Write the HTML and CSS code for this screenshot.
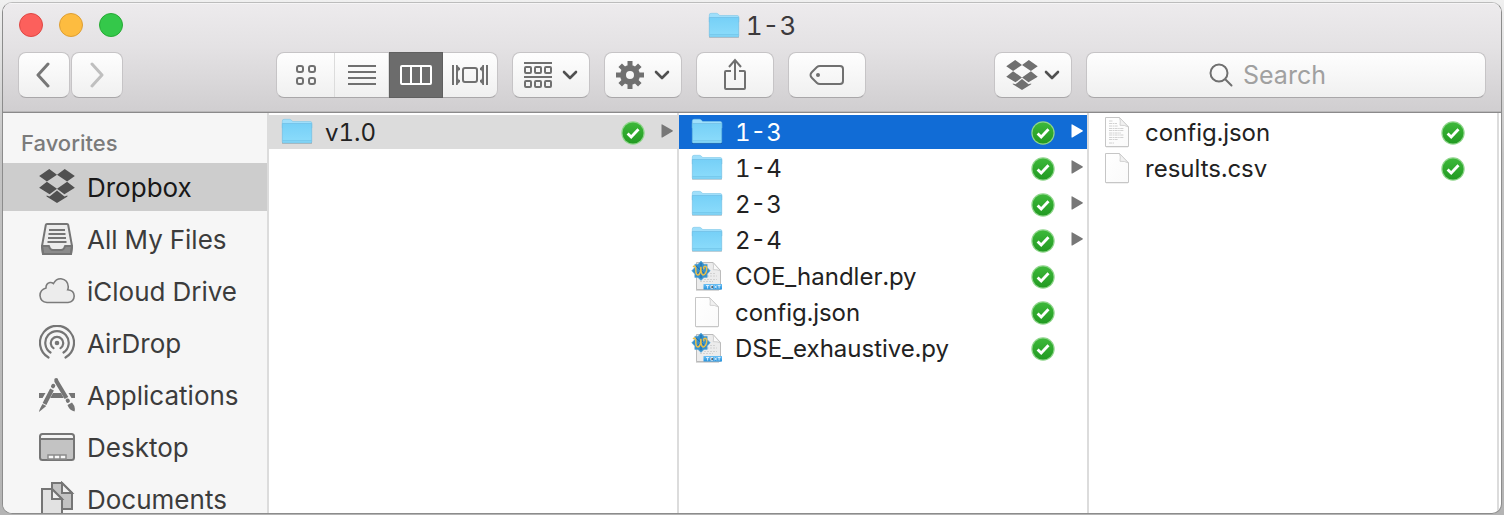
FILE: index.html
```html
<!DOCTYPE html>
<html lang="en">
<head>
<meta charset="utf-8">
<meta name="viewport" content="width=device-width, initial-scale=1">
<title>1-3</title>
<link rel="stylesheet" href="styles.css">
</head>
<body>
<svg class="defs" aria-hidden="true">
  <defs>
    <linearGradient id="folder-fill" x1="0" y1="0" x2="0" y2="1"><stop offset="0" stop-color="#76d0f7"/><stop offset="1" stop-color="#8cdcfb"/></linearGradient>
    <linearGradient id="check-fill" x1="0" y1="0" x2="0" y2="1"><stop offset="0" stop-color="#3db83a"/><stop offset="1" stop-color="#229a22"/></linearGradient>
    <linearGradient id="page-fill" x1="0" y1="0" x2="1" y2="1"><stop offset="0" stop-color="#fff"/><stop offset="1" stop-color="#fafafa"/></linearGradient>
    <linearGradient id="text-fill" x1="0" y1="0" x2="0" y2="1"><stop offset="0" stop-color="#6cc0f4"/><stop offset="1" stop-color="#2492de"/></linearGradient>
  </defs>
  <symbol id="dropbox" viewBox="0 0 106 101">
    <path fill="currentColor" d="M0 21 30 0 53 17 23 37ZM53 17 76 0 106 21 83 37ZM0 56 23 38 53 59 31 75ZM106 56 83 38 53 59 75 75ZM22 79 31 82 53 64 75 82 84 79V82L53 101 22 82Z"/>
  </symbol>
  <symbol id="folder" viewBox="0 0 32 28">
    <path fill="#000" opacity=".16" d="M1 24h30v2H1z"/>
    <path fill="#9fdffb" stroke="#7cc6e8" stroke-width=".6" d="M1.3 3q0-1.7 1.7-1.7h5.500q1 0 1.700.8l1.600 1.400h17.500q1.500 0 1.500 1.500V10h-29.500z"/>
    <path fill="url(#folder-fill)" stroke="#68b9e0" stroke-width=".6" d="M1.300 5.500h29.400V24q0 .9-.9.900H2.200q-.9 0-.9-.9z"/>
    <path stroke="#68bce2" stroke-width=".8" d="M1.500 22.800h29"/>
  </symbol>
  <symbol id="check" viewBox="0 0 24 24">
    <circle cx="12" cy="12" r="11.700" fill="#8ed58a"/>
    <circle cx="12" cy="12" r="10.500" fill="url(#check-fill)"/>
    <path fill="none" stroke="#fff" stroke-width="2.800" d="m6.600 12.400 3.600 3.600 7.300-7.800"/>
  </symbol>
  <symbol id="arrow" viewBox="0 0 12 18"><path fill="currentColor" d="M.5.900Q.5 0 1.400.5l10 5.700q.9.600 0 1.200l-10 6Q.5 13.900.5 13z"/></symbol>
  <symbol id="page" viewBox="0 0 32 32">
    <path fill="none" stroke="#000" stroke-opacity=".12" stroke-width="2" d="M5 30.500h22"/>
    <path fill="url(#page-fill)" stroke="#c6c6c6" d="M4.500 1.500h14L27.500 11v19.500h-23z"/>
    <path fill="#f1f1f1" stroke="#c9c9c9" stroke-width=".8" d="M18.500 1.500q1.300 3 .5 7.800 4.500-.5 8.500 1.700z"/>
  </symbol>
  <symbol id="page-text" viewBox="0 0 32 32">
    <use href="#page"/>
    <path stroke="#c6c6c6" stroke-width=".8" stroke-dasharray="3 .6 1.500 .5" d="M8 5h4M8 7.500h8M8 10h9M8 12.500h15M8 14.500h15M8 17h12M8 19h15M8 21.500h15M8 23.500h9M8 27h5"/>
  </symbol>
  <symbol id="python" viewBox="0 0 32 32">
    <path fill="none" stroke="#000" stroke-opacity=".2" stroke-width="1.500" d="M5 30h23"/>
    <path fill="#ececec" stroke="#b5b5b5" stroke-width=".9" d="M5.500 2.500h16.500l7.500 8v19h-24z"/>
    <path fill="#fafafa" stroke="#c0c0c0" stroke-width=".7" d="M22 2.500q1 3.500.2 7.200 4-.4 7.300 1.300z"/>
    <path stroke="#cfcfcf" stroke-width=".9" stroke-dasharray="2 1" d="M19 13.500h6M16 16h10M13 19.500h13M9 21.500h13"/>
    <path fill="#3590cd" stroke="#5ca9d9" stroke-width=".6" d="m10 1 3 3.300h3.200v3.300l3 3.200-3 3.300v3.300h-3.200l-3 3-3-3H3.800v-3.300l-3-3.300 3-3.200V4.300H7z"/>
    <path stroke="#1e6ca8" stroke-width="1" d="M10 3v15M5 15l10-9M5 6l10 9"/>
    <path fill="none" stroke="#e9c04c" stroke-width="1.500" stroke-linecap="round" d="M2.500 6.500q2.500-1.500 2.300 2.600-.2 6.200 2.300 5.800 2.600-.5 2.800-8.200-.1 7.500 1.900 8.200 2.500.4 3.700-4 .8-4.300-1.300-4.700-1.900.2-1.300 2.600"/>
    <path fill="url(#text-fill)" d="M12.500 24h18.500v5.500H12.500z"/>
    <path stroke="#e3f3ff" stroke-width=".9" d="M15 25.500h3.200m-1.600 0v3m5.400-3h-2.200v2.800h2.200m-2.200-1.400h2m1.500-1.400 2.500 2.900m0-2.900-2.500 2.900m3.500-2.900h2.700m-1.400 0v3"/>
  </symbol>
  <symbol id="chevron" viewBox="0 0 16 10"><path fill="none" stroke="#505050" stroke-width="2.600" stroke-linecap="round" stroke-linejoin="round" d="m2 2 6 6 6-6"/></symbol>
</svg>

<main class="window">
  <header class="header">
    <div class="titlebar">
      <div class="lights">
        <button class="light light-close" aria-label="Close"></button>
        <button class="light light-min" aria-label="Minimize"></button>
        <button class="light light-zoom" aria-label="Zoom"></button>
      </div>
      <h1 class="title"><svg class="folder-icon"><use href="#folder"/></svg>1-3</h1>
    </div>
    <div class="toolbar">
      <div class="nav">
        <button class="tool nav-button" aria-label="Back"><svg width="16" height="26" viewBox="0 0 16 26"><path class="line-thick" stroke="#777" d="M12 2 2 13l10 11"/></svg></button>
        <button class="tool nav-button" aria-label="Forward" disabled><svg width="16" height="26" viewBox="0 0 16 26"><path class="line-thick" stroke="#bfbfbf" d="m3 2 10 11L3 24"/></svg></button>
      </div>
      <div class="views">
        <button class="view view-first" aria-label="Icon view"><svg width="22" height="22" viewBox="0 0 22 22"><path class="line" d="M3 2h3q2 0 2 2v2q0 2-2 2H4Q2 8 2 6V4q0-2 2-2ZM16 2h2q2 0 2 2v2q0 2-2 2h-2q-2 0-2-2V4q0-2 2-2ZM4 14h2q2 0 2 2v2q0 2-2 2H4q-2 0-2-2v-2q0-2 2-2ZM16 14h2q2 0 2 2v2q0 2-2 2h-2q-2 0-2-2v-2q0-2 2-2Z"/></svg></button>
        <button class="view" aria-label="List view"><svg width="28" height="22" viewBox="0 0 28 22"><path class="line" d="M0 2h28M0 8h28M0 14h28M0 20h28"/></svg></button>
        <button class="view view-on" aria-label="Column view" aria-pressed="true"><svg width="32" height="22" viewBox="0 0 32 22"><path fill="none" stroke="#fff" stroke-width="2" d="M2 2h28q1 0 1 1v16q0 1-1 1H2q-1 0-1-1V3q0-1 1-1ZM11 2v18M21 2v18"/></svg></button>
        <button class="view" aria-label="Cover Flow view"><svg width="36" height="22" viewBox="0 0 36 22"><path class="line" d="M1 1v20M35 1v20M13 4h10q2 0 2 2v10q0 2-2 2H13q-2 0-2-2V6q0-2 2-2Z"/><path fill="#707070" d="M4 1h1.500Q6 3 8 4v2q-2 0-2 2v6q0 2 2 2v2q-2 1-2.500 3H4zM32 1h-1.500Q30 3 28 4v2q2 0 2 2v6q0 2-2 2v2q2 1 2.500 3H32z"/></svg></button>
      </div>
      <button class="tool menu" aria-label="Arrange">
        <svg width="28" height="28" viewBox="0 0 28 28"><path class="line" d="M0 2h28M0 16h28M2 6h4q1 0 1 1v4q0 1-1 1H2q-1 0-1-1V7q0-1 1-1ZM12 6h4q1 0 1 1v4q0 1-1 1h-4q-1 0-1-1V7q0-1 1-1ZM22 6h4q1 0 1 1v4q0 1-1 1h-4q-1 0-1-1V7q0-1 1-1ZM2 20h4q1 0 1 1v4q0 1-1 1H2q-1 0-1-1v-4q0-1 1-1ZM12 20h4q1 0 1 1v4q0 1-1 1h-4q-1 0-1-1v-4q0-1 1-1ZM22 20h4q1 0 1 1v4q0 1-1 1h-4q-1 0-1-1v-4q0-1 1-1Z"/></svg>
        <svg class="chevron"><use href="#chevron"/></svg>
      </button>
      <button class="tool menu" aria-label="Action">
        <svg width="28" height="28" viewBox="-14 -14 28 28"><g fill="none" stroke="#707070"><circle r="7" stroke-width="6"/><path stroke-width="5" d="M0-9v-5M0 9v5M-9 0h-5M9 0h5M-6.500-6.500l-3.300-3.300M6.500 6.500l3.300 3.300M6.500-6.500l3.300-3.300M-6.500 6.500l-3.300 3.300"/></g></svg>
        <svg class="chevron"><use href="#chevron"/></svg>
      </button>
      <button class="tool" aria-label="Share"><svg width="24" height="34" viewBox="0 0 24 34"><path class="line" d="M8 13H3q-1 0-1 1v16q0 1 1 1h18q1 0 1-1V14q0-1-1-1h-5M12 22V3M6 9l6-7 6 7"/></svg></button>
      <button class="tool" aria-label="Edit Tags"><svg width="36" height="22" viewBox="0 0 36 22"><path class="line" d="M11 2h20q3 0 3 3v12q0 3-3 3H11q-2 0-3-1l-5-5q-3-3 0-6l5-5q1-1 3-1Z"/><circle cx="9" cy="11" r="2" fill="#707070"/></svg></button>
      <button class="tool menu menu-dropbox" aria-label="Dropbox"><svg class="dropbox-tool"><use href="#dropbox"/></svg><svg class="chevron"><use href="#chevron"/></svg></button>
      <label class="tool search" for="search">
        <svg width="24" height="24" viewBox="0 0 24 24"><path class="line" stroke-linecap="round" d="M10 1.500a8.500 8.500 0 1 1 0 17 8.500 8.500 0 0 1 0-17ZM16 16l6.500 6.500"/></svg>
        <input class="search-input" id="search" type="text" placeholder="Search" aria-label="Search">
      </label>
    </div>
  </header>

  <div class="body">
    <nav class="sidebar" aria-labelledby="favorites">
      <h2 class="heading" id="favorites">Favorites</h2>
      <a class="place place-on" href="#dropbox-folder"><svg width="36" height="36"><use href="#dropbox" height="34"/></svg>Dropbox</a>
      <a class="place" href="#all"><svg width="36" height="36" viewBox="0 0 36 36"><path fill="#ececec" d="M7 3h22l4 22-3 8H6l-3-8z"/><path fill="#8b8b8b" stroke="#757575" stroke-width="2" stroke-linejoin="round" d="M3 25h7q1 4 4 4h8q3 0 4-4h7l-1 8H4z"/><path fill="none" stroke="#757575" stroke-width="2" stroke-linejoin="round" d="M8 3h20q1 0 1.200 1L33 25v1l-1 7H4l-1-7v-1L6.800 4Q7 3 8 3Z"/><path stroke="#757575" stroke-width="2" d="M10 9h16M9.500 13h17M9 17h18M8.500 21h19"/></svg>All My Files</a>
      <a class="place" href="#icloud"><svg width="36" height="36" viewBox="0 0 36 36"><path fill="#ececec" stroke="#7b7b7b" stroke-width="1.600" d="M8 29.500q-6.500-.5-7-7 .2-6 6-7.500-.2-4.500 4-5.500 1.800-.2 3.500 1Q17 5.500 22 5.700q7 .8 7.300 8.300-.1 1.500-.6 2.700 6.300.5 6.500 6.300-.2 6-6.200 6.500z"/></svg>iCloud Drive</a>
      <a class="place" href="#airdrop"><svg width="36" height="36" viewBox="0 0 36 36"><g fill="none" stroke="#757575" stroke-width="2.200" stroke-linecap="round"><path d="M9.500 32.500a17 17 0 1 1 17 0M11.500 27.500a11.700 11.700 0 1 1 13 0M14.500 23.200a6.200 6.200 0 1 1 7 0"/></g><circle cx="18" cy="18" r="2.300" fill="#757575"/></svg>AirDrop</a>
      <a class="place" href="#applications"><svg width="36" height="36" viewBox="0 0 36 36"><path fill="#757575" d="M0 16h6.500L3.600 21H0zM14 16h8l2.800 5H11.200zM29.500 16H36v5h-3.500z"/><path stroke="#757575" stroke-width="4.200" d="M17 3.500 27.500 21M13 12.500 5.500 27"/><path stroke="#757575" stroke-width="4" stroke-linecap="round" d="M17.200 3v.1M14 9.300l.3-.5M28.700 23.500l.2.300"/><path fill="#757575" d="m3.500 27 3.800 2L0 35q0-2 3.500-8ZM28.500 28l4.500-2.500q4 4.500 2.500 9-5.500-1.500-7-6.500Z"/></svg>Applications</a>
      <a class="place" href="#desktop"><svg width="36" height="36" viewBox="0 0 36 36"><rect x="1" y="5" width="34" height="26" rx="2.500" fill="#c3c3c3"/><path fill="#f3f3f3" d="M2 6h32v4H2z"/><rect x="1" y="5" width="34" height="26" rx="2.500" fill="none" stroke="#757575" stroke-width="2"/><path stroke="#757575" stroke-width="2" d="M1 10h34"/><path fill="#f7f7f7" stroke="#8c8c8c" stroke-width="1.500" d="M9 26h18v4H9zM15 26v4M21 26v4"/></svg>Desktop</a>
      <a class="place" href="#documents"><svg width="36" height="36" viewBox="0 0 36 36"><path fill="#c3c3c3" stroke="#757575" stroke-width="2" d="M13 2h10l10 10v16H13z"/><path fill="#f0f0f0" stroke="#757575" stroke-width="2" d="M23 2v10h10z"/><path fill="#e2e2e2" stroke="#757575" stroke-width="2" d="M3 8h10l10 10v20H3z"/><path fill="#f0f0f0" stroke="#757575" stroke-width="2" d="M13 8v10h10z"/></svg>Documents</a>
    </nav>

    <ul class="column">
      <li><a class="file file-path" href="#v1.0"><svg class="file-icon"><use href="#folder"/></svg><span class="name">v1.0</span><svg class="check"><use href="#check"/></svg><svg class="arrow"><use href="#arrow"/></svg></a></li>
    </ul>
    <ul class="column">
      <li><a class="file file-on" href="#1-3"><svg class="file-icon"><use href="#folder"/></svg><span class="name">1-3</span><svg class="check"><use href="#check"/></svg><svg class="arrow"><use href="#arrow"/></svg></a></li>
      <li><a class="file" href="#1-4"><svg class="file-icon"><use href="#folder"/></svg><span class="name">1-4</span><svg class="check"><use href="#check"/></svg><svg class="arrow"><use href="#arrow"/></svg></a></li>
      <li><a class="file" href="#2-3"><svg class="file-icon"><use href="#folder"/></svg><span class="name">2-3</span><svg class="check"><use href="#check"/></svg><svg class="arrow"><use href="#arrow"/></svg></a></li>
      <li><a class="file" href="#2-4"><svg class="file-icon"><use href="#folder"/></svg><span class="name">2-4</span><svg class="check"><use href="#check"/></svg><svg class="arrow"><use href="#arrow"/></svg></a></li>
      <li><a class="file" href="#coe"><svg class="file-icon"><use href="#python"/></svg><span class="name">COE_handler.py</span><svg class="check"><use href="#check"/></svg><span class="arrow"></span></a></li>
      <li><a class="file" href="#config"><svg class="file-icon"><use href="#page"/></svg><span class="name">config.json</span><svg class="check"><use href="#check"/></svg><span class="arrow"></span></a></li>
      <li><a class="file" href="#dse"><svg class="file-icon"><use href="#python"/></svg><span class="name">DSE_exhaustive.py</span><svg class="check"><use href="#check"/></svg><span class="arrow"></span></a></li>
    </ul>
    <ul class="column">
      <li><a class="file" href="#run-config"><svg class="file-icon"><use href="#page-text"/></svg><span class="name">config.json</span><svg class="check"><use href="#check"/></svg><span class="arrow"></span></a></li>
      <li><a class="file" href="#results"><svg class="file-icon"><use href="#page"/></svg><span class="name">results.csv</span><svg class="check"><use href="#check"/></svg><span class="arrow"></span></a></li>
    </ul>
  </div>
</main>
</body>
</html>
```
FILE: styles.css
```css
* { box-sizing: border-box; }

body {
  margin: 0;
  height: 100vh;
  padding: 2px 2px 1px;
  background: linear-gradient(#f0f0f0, #c4c4c4 30%, #b4b4b4);
  font-family: Inter, "Liberation Sans", sans-serif;
  font-size: 24px;
  font-variant-numeric: tabular-nums;
  color: #222;
}

button, input { font: inherit; margin: 0; padding: 0; border: 0; background: none; }
svg { display: block; flex: none; }
ul { list-style: none; margin: 0; padding: 0; }
a { color: inherit; text-decoration: none; }
.defs { position: absolute; width: 0; height: 0; }

.window {
  display: flex;
  flex-direction: column;
  height: 100%;
  border: 1px solid #8c8c8c;
  border-top-color: #bcbcbc;
  border-radius: 10px;
  overflow: hidden;
  background: #fff;
}

.header {
  flex: none;
  background: linear-gradient(#edebed, #e4e2e4 40%, #d0ced0);
  border-bottom: 1px solid #8b8a8b;
  box-shadow: inset 0 -1px #b9b8b9, inset 0 1px #f6f5f6;
}

.titlebar { display: grid; grid-template-columns: 1fr auto 1fr; align-items: center; height: 44px; padding: 0 16px; }
.lights { display: flex; gap: 16px; }
.light { width: 24px; height: 24px; border: 1px solid; border-radius: 50%; }
.light-close { background: #fc605c; border-color: #df4744; }
.light-min { background: #fdbc40; border-color: #de9f34; }
.light-zoom { background: #34c84a; border-color: #27aa35; }
.title { display: flex; align-items: center; gap: 6px; margin: 0; padding-top: 2px; font-size: 26px; font-weight: 400; line-height: 32px; color: #3c3a3c; }
.folder-icon { width: 32px; height: 28px; }

.toolbar { display: flex; gap: 14px; padding: 5px 15px 14px; }
.tool, .views {
  height: 46px;
  border: 1px solid #c6c4c6;
  border-bottom-color: #a9a7a9;
  border-radius: 8px;
  background: linear-gradient(#fefefe, #f0f0f0);
}
.tool { display: flex; flex: none; align-items: center; justify-content: center; width: 78px; }
.nav { display: flex; gap: 1px; margin-right: 139px; }
.nav-button { width: 52px; }
.views { display: flex; flex: none; width: 222px; }
.view { display: flex; flex: 1 1 54px; align-items: center; justify-content: center; border-right: 1px solid #dcdcdc; }
.view:last-child { border-right: 0; }
.view-first { flex-basis: 58px; }
.view-on { background: #6c6c6c; margin: -1px 0; border: 1px solid #606060; }
.menu { gap: 10px; }
.menu-dropbox { gap: 6px; margin-left: auto; color: #707070; }
.dropbox-tool { width: 32px; height: 30px; }
.chevron { width: 16px; height: 10px; }
.search { flex: 0 1 400px; gap: 10px; }
.search-input { width: 120px; height: 40px; outline: 0; font-size: 25px; color: #333; appearance: none; }
.search-input::placeholder { color: #a0a0a0; opacity: 1; }
.line { fill: none; stroke: #707070; stroke-width: 2; }
.line-thick { fill: none; stroke-width: 3; stroke-linecap: round; stroke-linejoin: round; }

.body { display: flex; flex: 1; min-height: 0; padding-right: 2px; }
.sidebar {
  display: flex;
  flex: none;
  flex-direction: column;
  gap: 4px;
  width: 266px;
  overflow: hidden;
  background: #f6f6f6;
  border-right: 2px solid #dcdcdc;
}
.heading { margin: 0; padding: 14px 18px 0; height: 46px; flex: none; font-size: 22px; font-weight: 500; line-height: 32px; color: #7b7b7b; }
.place { display: flex; flex: none; align-items: center; gap: 12px; height: 48px; padding: 2px 0 0 36px; font-size: 26px; line-height: 32px; color: #3c3c3c; }
.place svg { margin-bottom: 2px; }
.place-on { background: #cdcdcd; color: #181818; }
.place-on svg { color: #505050; }

.column { display: flex; flex: 1 1 0; flex-direction: column; gap: 2px; min-width: 0; padding-top: 2px; border-right: 2px solid #dcdcdc; }
.file { display: flex; align-items: center; height: 34px; padding: 2px 4px 0 12px; line-height: 32px; }
.file-icon { width: 32px; height: 32px; margin: 0 12px 2px 0; }
.name { flex: 1; min-width: 0; white-space: nowrap; }
.check { width: 24px; height: 24px; margin-right: 16px; }
.arrow { width: 12px; height: 18px; color: #777; }
.file-path { background: #dcdcdc; }
.file-on { background: #116cd6; color: #fff; }
.file-on .arrow { color: #fff; }
```
